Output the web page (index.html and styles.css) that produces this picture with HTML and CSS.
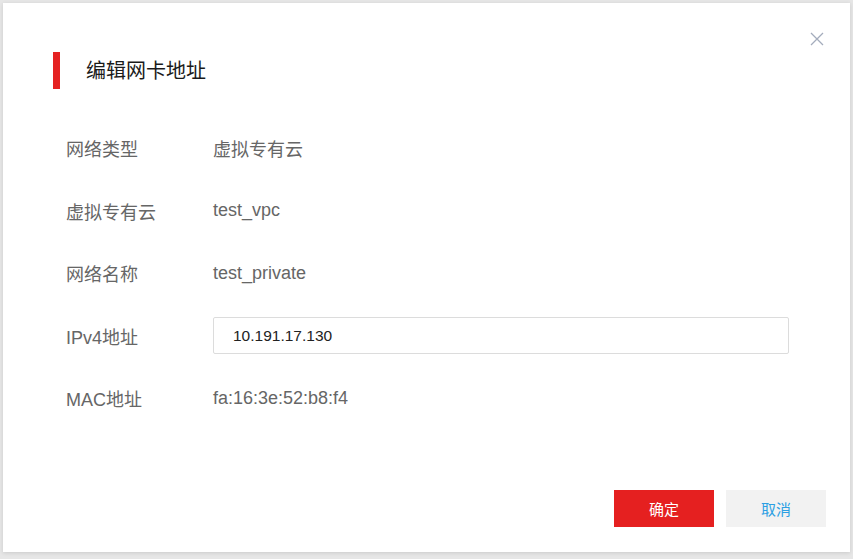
FILE: index.html
```html
<!DOCTYPE html>
<html lang="zh">
<head>
<meta charset="utf-8">
<title>编辑网卡地址</title>
<link rel="stylesheet" href="styles.css">
</head>
<body>
<div class="dialog">
  <svg class="close" width="14" height="14" viewBox="0 0 14 14"><path d="M1 1L13 13M13 1L1 13" stroke="#a4acbc" stroke-width="1.3" fill="none"/></svg>
  <div class="header">
    <span class="bar"></span>
    <h1 class="title">编辑网卡地址</h1>
  </div>
  <div class="form">
    <div class="row"><span class="label">网络类型</span><span class="value">虚拟专有云</span></div>
    <div class="row"><span class="label">虚拟专有云</span><span class="value">test_vpc</span></div>
    <div class="row"><span class="label">网络名称</span><span class="value">test_private</span></div>
    <div class="row"><span class="label">IPv4地址</span><div class="input">10.191.17.130</div></div>
    <div class="row"><span class="label">MAC地址</span><span class="value">fa:16:3e:52:b8:f4</span></div>
  </div>
  <div class="footer">
    <button class="btn primary">确定</button>
    <button class="btn secondary">取消</button>
  </div>
</div>
</body>
</html>
```
FILE: styles.css
```css
html, body {
  margin: 0;
  padding: 0;
}
body {
  width: 853px;
  height: 559px;
  background: #e6e6e6;
  padding: 3px 3px 0 3px;
  box-sizing: border-box;
  font-family: "Liberation Sans", "Noto Sans CJK SC", sans-serif;
  overflow: hidden;
}
.dialog {
  position: relative;
  width: 847px;
  height: 549px;
  background: #fff;
  box-shadow: 0 1px 4px rgba(0,0,0,0.12);
  box-sizing: border-box;
  display: flex;
  flex-direction: column;
  padding: 49px 24px 25px 50px;
}
.close {
  position: absolute;
  top: 29px;
  right: 26px;
}
.header {
  display: flex;
  align-items: center;
  height: 37px;
}
.bar {
  width: 7px;
  height: 37px;
  background: #e52222;
}
.title {
  margin: 0 0 0 26px;
  font-size: 20px;
  font-weight: normal;
  color: #1a1a1a;
  line-height: 24px;
}
.form {
  margin-top: 28px;
  padding-left: 13px;
  display: flex;
  flex-direction: column;
}
.row {
  display: flex;
  align-items: center;
  height: 62.5px;
  font-size: 18px;
  color: #666;
}
.label {
  width: 147px;
  flex: none;
}
.value {
  color: #666;
}
.input {
  width: 576px;
  height: 37px;
  box-sizing: border-box;
  border: 1px solid #dcdcdc;
  border-radius: 2px;
  padding-left: 19px;
  display: flex;
  align-items: center;
  font-size: 15.5px;
  color: #222;
}
.footer {
  margin-top: auto;
  display: flex;
  justify-content: flex-end;
  gap: 12px;
}
.btn {
  width: 100px;
  height: 37px;
  border: none;
  font-family: "Liberation Sans", "Noto Sans CJK SC", sans-serif;
  font-size: 15px;
  padding: 0;
}
.primary {
  background: #e52020;
  color: #fff;
}
.secondary {
  background: #f2f2f2;
  color: #2d9fe3;
}
```
